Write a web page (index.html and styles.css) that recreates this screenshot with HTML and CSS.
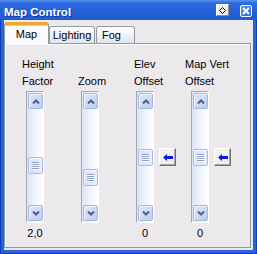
FILE: index.html
```html
<!DOCTYPE html>
<html lang="en">

<head>
    <meta charset="UTF-8">
    <title>Map Control</title>
    <link rel="stylesheet" href="styles.css">
</head>

<body>
    <div class="window">
        <div class="titlebar">
            <span class="title">Map Control</span>
            <span class="tb-btn pin">
                <svg width="7" height="7" viewBox="0 0 7 7"><path d="M3.5 0.5 L6.5 3.5 L3.5 6.5 L0.5 3.5 Z" fill="none" stroke="#000" stroke-width="1"/></svg>
            </span>
            <span class="tb-btn close">
                <svg width="8" height="8" viewBox="0 0 8 8"><path d="M1 1 L7 7 M7 1 L1 7" stroke="#fff" stroke-width="2"/></svg>
            </span>
        </div>

        <div class="body">
            <div class="tabs">
                <div class="tab tab-map active">Map</div>
                <div class="tab tab-lighting">Lighting</div>
                <div class="tab tab-fog">Fog</div>
            </div>

            <div class="panel">
                <div class="col col-height">
                    <div class="label">Height<br>Factor</div>
                    <div class="control">
                        <div class="vscroll">
                            <div class="sbtn"><svg width="8" height="5" viewBox="0 0 8 5"><polyline points="1,4.5 4,1.5 7,4.5" fill="none" stroke="#4d6185" stroke-width="2"/></svg></div>
                            <div class="track"><div class="thumb" style="margin-top: 48px"><span></span><span></span><span></span><span></span></div></div>
                            <div class="sbtn"><svg width="8" height="5" viewBox="0 0 8 5"><polyline points="1,0.5 4,3.5 7,0.5" fill="none" stroke="#4d6185" stroke-width="2"/></svg></div>
                        </div>
                    </div>
                    <div class="value">2,0</div>
                </div>

                <div class="col col-zoom">
                    <div class="label">&nbsp;<br>Zoom</div>
                    <div class="control">
                        <div class="vscroll">
                            <div class="sbtn"><svg width="8" height="5" viewBox="0 0 8 5"><polyline points="1,4.5 4,1.5 7,4.5" fill="none" stroke="#4d6185" stroke-width="2"/></svg></div>
                            <div class="track"><div class="thumb" style="margin-top: 60px"><span></span><span></span><span></span><span></span></div></div>
                            <div class="sbtn"><svg width="8" height="5" viewBox="0 0 8 5"><polyline points="1,0.5 4,3.5 7,0.5" fill="none" stroke="#4d6185" stroke-width="2"/></svg></div>
                        </div>
                    </div>
                    <div class="value"></div>
                </div>

                <div class="col col-elev">
                    <div class="label">Elev<br>Offset</div>
                    <div class="control">
                        <div class="vscroll">
                            <div class="sbtn"><svg width="8" height="5" viewBox="0 0 8 5"><polyline points="1,4.5 4,1.5 7,4.5" fill="none" stroke="#4d6185" stroke-width="2"/></svg></div>
                            <div class="track"><div class="thumb" style="margin-top: 40px"><span></span><span></span><span></span><span></span></div></div>
                            <div class="sbtn"><svg width="8" height="5" viewBox="0 0 8 5"><polyline points="1,0.5 4,3.5 7,0.5" fill="none" stroke="#4d6185" stroke-width="2"/></svg></div>
                        </div>
                        <div class="reset-btn">
                            <svg width="10" height="7" viewBox="0 0 10 7"><polygon points="0,3.5 4,0 4,2 10,2 10,5 4,5 4,7" fill="#0a14f0"/></svg>
                        </div>
                    </div>
                    <div class="value">0</div>
                </div>

                <div class="col col-vert">
                    <div class="label">Map Vert<br>Offset</div>
                    <div class="control">
                        <div class="vscroll">
                            <div class="sbtn"><svg width="8" height="5" viewBox="0 0 8 5"><polyline points="1,4.5 4,1.5 7,4.5" fill="none" stroke="#4d6185" stroke-width="2"/></svg></div>
                            <div class="track"><div class="thumb" style="margin-top: 40px"><span></span><span></span><span></span><span></span></div></div>
                            <div class="sbtn"><svg width="8" height="5" viewBox="0 0 8 5"><polyline points="1,0.5 4,3.5 7,0.5" fill="none" stroke="#4d6185" stroke-width="2"/></svg></div>
                        </div>
                        <div class="reset-btn">
                            <svg width="10" height="7" viewBox="0 0 10 7"><polygon points="0,3.5 4,0 4,2 10,2 10,5 4,5 4,7" fill="#0a14f0"/></svg>
                        </div>
                    </div>
                    <div class="value">0</div>
                </div>
            </div>
        </div>
    </div>
</body>

</html>
```

FILE: styles.css
```css
body {
    margin: 0;
    font-family: 'Liberation Sans', Arial, sans-serif;
    font-size: 11px;
    color: #000;
}

.window {
    width: 257px;
    height: 254px;
    box-sizing: border-box;
    display: flex;
    flex-direction: column;
    background: #2863da;
    box-shadow: inset 1px 0 0 #0b3fb4, inset -1px 0 0 #0b3fb4, inset 0 -1px 0 #0b3fb4;
}

.titlebar {
    height: 20px;
    display: flex;
    align-items: flex-start;
    padding: 0 5px 0 4px;
    background: linear-gradient(#5a95f2 0, #2c6ae0 3px, #2461d9 60%, #1f5bd2 100%);
    color: #fff;
}

.title {
    flex: 1;
    margin-top: 5px;
    font-size: 11.5px;
    font-weight: bold;
    line-height: 14px;
    text-shadow: 1px 1px 0 #0c3a9c;
}

.tb-btn {
    width: 13px;
    height: 12px;
    box-sizing: border-box;
    display: flex;
    align-items: center;
    justify-content: center;
}

.pin {
    margin-top: 4px;
    margin-right: 11px;
    background: #efeeea;
    border: 1px solid;
    border-color: #fff #8d8c88 #8d8c88 #fff;
}

.close {
    width: 12px;
    margin-top: 5px;
    background: linear-gradient(135deg, #5b95f5, #2762d8);
    border: 1px solid #fff;
    border-radius: 2px;
}

.body {
    flex: 1;
    margin: 0 4px 4px 4px;
    padding: 2px 2px 2px 0;
    background: #ece9ed;
    display: flex;
    flex-direction: column;
}

.tabs {
    height: 21px;
    display: flex;
    align-items: flex-end;
}

.tab {
    height: 17px;
    box-sizing: border-box;
    border: 1px solid #919b9c;
    border-bottom: none;
    border-radius: 3px 3px 0 0;
    background: linear-gradient(#fefefe, #f0f2f7 50%, #dde4f1);
    text-align: center;
    line-height: 15px;
    padding-top: 1px;
}

.tab-map {
    width: 45px;
}

.tab-lighting {
    width: 46px;
    margin-left: 0;
}

.tab-fog {
    width: 39px;
    margin-left: 1px;
    padding-right: 8px;
}

.tab.active {
    height: 22px;
    margin-bottom: -1px;
    position: relative;
    z-index: 1;
    background: #fcfcfe;
    border-top: 3px solid #f0a634;
    box-shadow: inset 0 1px 0 #ffc94a;
    padding-top: 2px;
}

.panel {
    flex: 1;
    border: 1px solid #919b9c;
    box-shadow: inset 1px 1px 0 #fbfbfd;
    background: #ece9ed;
    display: flex;
    padding: 12px 0 0 17px;
}

.col {
    width: 55px;
    display: flex;
    flex-direction: column;
}

.label {
    height: 34px;
    line-height: 17px;
    white-space: nowrap;
}

.col-zoom .label {
    padding-left: 1px;
}

.col-elev .label {
    padding-left: 2px;
}

.col-vert .label {
    margin-left: -2px;
}

.control {
    margin-top: 1px;
    margin-left: 4px;
    display: flex;
    align-items: center;
    gap: 5px;
}

.vscroll {
    width: 18px;
    height: 132px;
    box-sizing: border-box;
    border: 1px solid;
    border-color: #a7a6aa #fff #fff #a7a6aa;
    padding: 1px 0 1px 1px;
    background: linear-gradient(to right, #dbe5f8, #f3f6fd 60%, #fefeff);
    display: flex;
    flex-direction: column;
}

.sbtn {
    width: 15px;
    height: 16px;
    box-sizing: border-box;
    border: 1px solid #a7b7db;
    border-radius: 2px;
    background: linear-gradient(135deg, #dfe8fb, #bccdee);
    box-shadow: inset 1px 1px 0 #eef3fe;
    display: flex;
    align-items: center;
    justify-content: center;
}

.track {
    flex: 1;
}

.thumb {
    width: 15px;
    height: 17px;
    box-sizing: border-box;
    border: 1px solid #aab9dc;
    border-radius: 2px;
    background: linear-gradient(to right, #d5e0f8, #eaf0fd);
    box-shadow: inset 1px 1px 0 #f7f9ff;
    display: flex;
    flex-direction: column;
    align-items: center;
    justify-content: center;
    gap: 1px;
}

.thumb span {
    width: 7px;
    height: 1px;
    background: #8c9fc9;
    box-shadow: 0 1px 0 #fff;
}

.reset-btn {
    width: 17px;
    height: 18px;
    box-sizing: border-box;
    border: 1px solid;
    border-color: #fff #6f6f6f #6f6f6f #fff;
    box-shadow: inset -1px -1px 0 #a8a7a3;
    background: #f1f0ec;
    display: flex;
    align-items: center;
    justify-content: center;
}

.value {
    width: 18px;
    margin-left: 4px;
    margin-top: 4px;
    line-height: 13px;
    text-align: center;
}
```
